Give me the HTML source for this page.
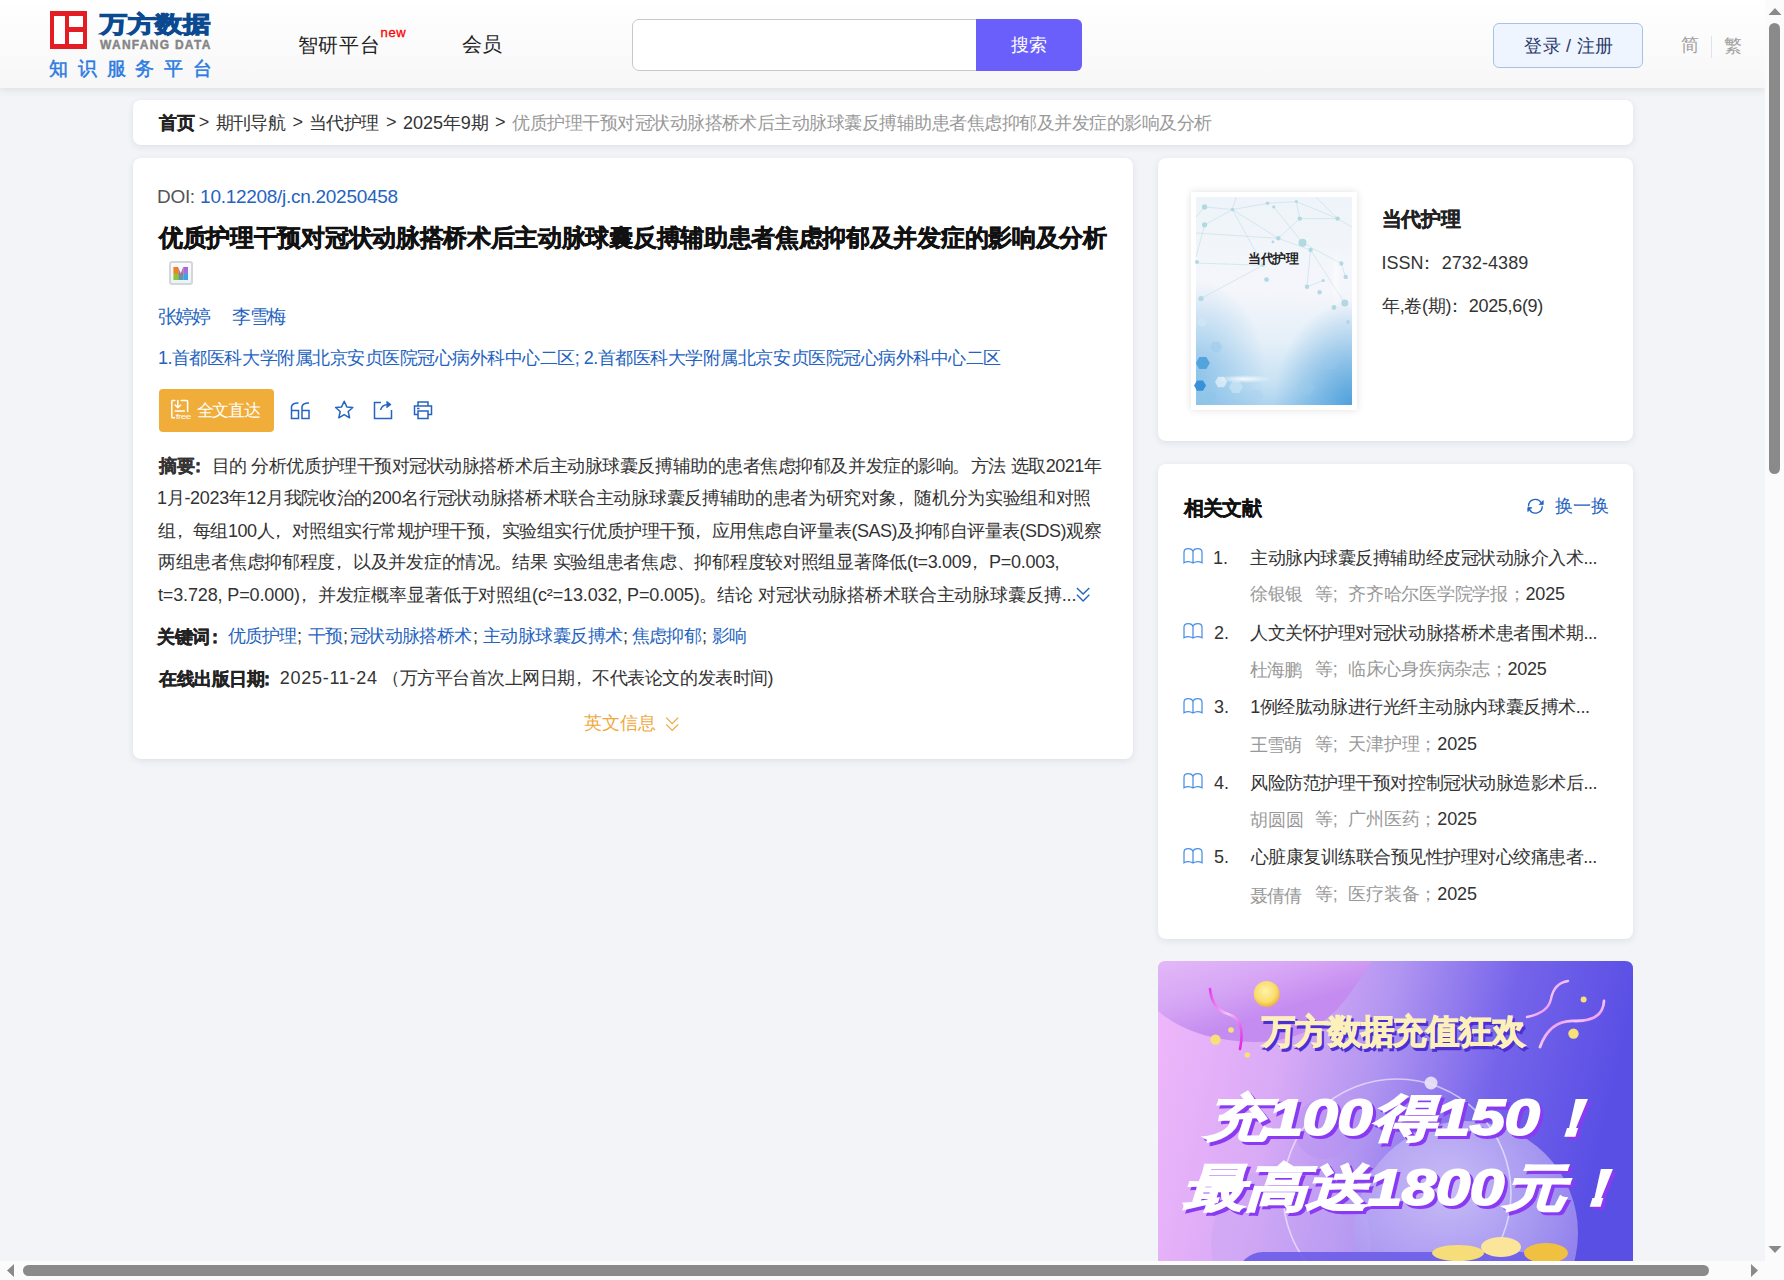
<!DOCTYPE html>
<html><head><meta charset="utf-8">
<style>
*{margin:0;padding:0;box-sizing:border-box}
html,body{width:1784px;height:1280px;overflow:hidden}
body{position:relative;background:#f2f4f8;font-family:"Liberation Sans",sans-serif;color:#333;font-size:18px;letter-spacing:-0.45px}
.a{position:absolute;white-space:nowrap;line-height:26px}
#hdr{position:absolute;left:0;top:0;width:1765px;height:88px;background:linear-gradient(#fff,#f7f7f8);box-shadow:0 2px 8px rgba(0,0,0,0.09)}
.card{position:absolute;background:#fff;border-radius:8px;box-shadow:0 2px 7px rgba(20,30,50,0.09)}
.blue{color:#2563c0}
.g{color:#999}
svg{position:absolute;overflow:visible}
</style></head><body>
<div id="hdr"></div>
<!-- logo -->
<div class="a" style="left:50px;top:11px;width:37px;height:38px;background:#e41d25"></div>
<div class="a" style="left:54px;top:16px;width:11px;height:28px;background:#fff"></div>
<div class="a" style="left:69px;top:16px;width:14px;height:11px;background:#fff"></div>
<div class="a" style="left:69px;top:32px;width:14px;height:12px;background:#fff"></div>
<div class="a" id="logo1" style="left:100px;top:5px;font-size:27px;font-weight:900;color:#0b4a91;line-height:36px;letter-spacing:0.667px;-webkit-text-stroke:1.3px #0b4a91;transform:scaleY(0.84);transform-origin:0 30px">万方数据</div>
<div class="a" id="logo2" style="left:100px;top:38px;font-size:12px;font-weight:bold;color:#858585;line-height:14px;letter-spacing:1.282px;-webkit-text-stroke:0.4px #858585">WANFANG DATA</div>
<div class="a" id="logo3" style="left:49px;top:56px;font-size:19px;color:#2c7be0;line-height:26px;letter-spacing:9.800px;-webkit-text-stroke:0.5px #2c7be0">知识服务平台</div>
<div class="a" id="nav1" style="left:297.6px;top:31px;font-size:20px;color:#222;line-height:28px;letter-spacing:0.9px">智研平台</div>
<div class="a" id="nav2" style="left:380.6px;top:25px;font-size:13px;color:#f00;line-height:16px;letter-spacing:0.650px;-webkit-text-stroke:0.3px #f00">new</div>
<div class="a" id="nav3" style="left:462px;top:30px;font-size:20px;color:#222;line-height:28px;letter-spacing:0">会员</div>
<div class="a" style="left:632px;top:19px;width:350px;height:52px;background:#fff;border:1px solid #c9c9c9;border-radius:7px 0 0 7px"></div>
<div class="a" style="left:976px;top:19px;width:106px;height:52px;background:#6a5ffb;border-radius:0 6px 6px 0"></div>
<div class="a" id="srch" style="left:1011px;top:32px;color:#fff;font-size:18px;letter-spacing:0">搜索</div>
<div class="a" style="left:1493px;top:23px;width:150px;height:45px;background:#eef5fe;border:1px solid #a8c0ea;border-radius:6px"></div>
<div class="a" id="login" style="left:1524.30px;top:33px;color:#2a3a6a;font-size:18px;letter-spacing:0.267px">登录 / 注册</div>
<div class="a" id="jian" style="left:1681px;top:32px;color:#a0a0a0">简</div>
<div class="a" style="left:1711px;top:36px;width:1px;height:22px;background:#e2e2e2"></div>
<div class="a" id="fan" style="left:1724px;top:33px;color:#a0a0a0">繁</div>

<!-- breadcrumb -->
<div class="card" style="left:133px;top:100px;width:1500px;height:45px"></div>
<div class="a" id="bc1" style="left:159.30px;top:110px;color:#222;font-weight:bold;-webkit-text-stroke:0.3px #222">首页</div>
<div class="a" id="bc2" style="left:198.80px;top:109px">&gt;</div>
<div class="a" id="bc3" style="left:215.80px;top:110px;letter-spacing:-0.683px">期刊导航</div>
<div class="a" id="bc4" style="left:292.50px;top:109px">&gt;</div>
<div class="a" id="bc5" style="left:309.20px;top:110px;letter-spacing:-0.717px">当代护理</div>
<div class="a" id="bc6" style="left:386px;top:109px">&gt;</div>
<div class="a" id="bc7" style="left:403px;top:110px;letter-spacing:-0.050px">2025年9期</div>
<div class="a" id="bc8" style="left:495px;top:109px">&gt;</div>
<div class="a g" id="bc9" style="left:512.20px;top:110px;letter-spacing:-0.517px">优质护理干预对冠状动脉搭桥术后主动脉球囊反搏辅助患者焦虑抑郁及并发症的影响及分析</div>

<!-- main card -->
<div class="card" style="left:133px;top:158px;width:1000px;height:601px"></div>
<div class="a" id="doi1" style="left:157.10px;top:184px;color:#555;font-size:19px;letter-spacing:-0.334px">DOI:</div>
<div class="a blue" id="doi2" style="left:200.10px;top:184px;font-size:19px;letter-spacing:-0.281px">10.12208/j.cn.20250458</div>
<div class="a" id="title" style="left:159px;top:222px;line-height:32px;font-size:24px;font-weight:bold;color:#111;-webkit-text-stroke:0.5px #111;letter-spacing:-0.307px">优质护理干预对冠状动脉搭桥术后主动脉球囊反搏辅助患者焦虑抑郁及并发症的影响及分析</div>
<div class="a" style="left:169px;top:261px;width:24px;height:24px;border:2px solid #d6d6d6;border-radius:3px;background:linear-gradient(#fafcff,#eaf2fb)"></div>
<svg style="left:173px;top:267px" width="16" height="14" viewBox="0 0 16 14">
<defs><linearGradient id="ml" x1="0" y1="0" x2="0" y2="1"><stop offset="0" stop-color="#f97a1a"/><stop offset="0.45" stop-color="#e8862a"/><stop offset="0.6" stop-color="#8ccc2c"/><stop offset="1" stop-color="#96bd3a"/></linearGradient>
<linearGradient id="mm" x1="0" y1="0" x2="0" y2="1"><stop offset="0" stop-color="#f07a6a"/><stop offset="0.5" stop-color="#a07a8a"/><stop offset="1" stop-color="#4ea69a"/></linearGradient>
<linearGradient id="mr" x1="0" y1="0" x2="0" y2="1"><stop offset="0" stop-color="#b45cdc"/><stop offset="0.45" stop-color="#9a78e0"/><stop offset="0.6" stop-color="#44a0e6"/><stop offset="1" stop-color="#3ea2ea"/></linearGradient>
<clipPath id="mc"><path d="M0.4 0 H5.2 L7.7 6.2 L10.2 0 H15 V13 H0.4 Z"/></clipPath></defs>
<g clip-path="url(#mc)"><rect x="0" y="0" width="5.2" height="13" fill="url(#ml)"/><rect x="5.2" y="0" width="5" height="13" fill="url(#mm)"/><rect x="10.2" y="0" width="5" height="13" fill="url(#mr)"/></g>
</svg>
<div class="a blue" id="au1" style="left:158.10px;top:304px;font-size:19px;letter-spacing:-2.050px">张婷婷</div>
<div class="a blue" id="au2" style="left:232.40px;top:304px;font-size:19px;letter-spacing:-1.500px">李雪梅</div>
<div class="a blue" id="aff" style="left:157.90px;top:345px;letter-spacing:-0.485px">1.首都医科大学附属北京安贞医院冠心病外科中心二区; 2.首都医科大学附属北京安贞医院冠心病外科中心二区</div>
<div class="a" style="left:159px;top:389px;width:115px;height:43px;background:#f0ad3a;border-radius:4px"></div>
<svg style="left:171px;top:400px" width="21" height="20" viewBox="0 0 21 20" fill="none" stroke="#fff" stroke-width="1.5" stroke-linecap="round">
<path d="M3.8 0.5 H1.6 Q0.8 0.5 0.8 1.3 V16.9 Q0.8 17.7 1.6 17.7 H3.5"/><path d="M10.2 0.5 H15.8 Q16.6 0.5 16.6 1.3 V11.6"/><path d="M6.8 0.5 V7.6 M4.1 5 L6.8 7.8 L9.7 5"/><path d="M4.2 10.9 H13.4"/>
<text x="4.8" y="18.9" font-size="7.6" textLength="15" lengthAdjust="spacingAndGlyphs" fill="#fff" stroke="none" font-family="Liberation Sans">free</text>
</svg>
<div class="a" id="free" style="left:196.60px;top:398px;color:#fff;font-size:17px;letter-spacing:-1.267px">全文直达</div>
<!-- action icons -->
<svg style="left:290px;top:401px" width="21" height="19" viewBox="0 0 21 19" fill="none" stroke="#2563c0" stroke-width="1.5">
<path d="M8.5 2 Q2.5 1.8 1.5 5.5 V17.5 H8.5 V9.5 H1.5"/><path d="M19 2 Q13 1.8 12 5.5 V17.5 H19 V9.5 H12"/>
</svg>
<svg style="left:334px;top:400px" width="21" height="21" viewBox="0 0 21 21" fill="none" stroke="#2563c0" stroke-width="1.5" stroke-linejoin="round">
<path d="M10.2 1.3 L12.8 6.9 L18.8 7.5 L14.2 11.5 L15.6 17.8 L10.2 14.6 L4.8 17.8 L6.2 11.5 L1.6 7.5 L7.6 6.9 Z"/>
</svg>
<svg style="left:373px;top:400px" width="21" height="21" viewBox="0 0 21 21" fill="none" stroke="#2563c0" stroke-width="1.5">
<path d="M8 2.5 H1.5 V18.5 H18.5 V10"/><path d="M7.5 10 Q9 4.5 15.5 4.5" /><path d="M13.5 1.5 L17.5 4.5 L13.5 7.5" fill="#2563c0" stroke-linejoin="round"/>
</svg>
<svg style="left:413px;top:400px" width="21" height="21" viewBox="0 0 21 21" fill="none" stroke="#2563c0" stroke-width="1.5">
<path d="M5 6 V2 H15 V6"/><path d="M5 14.5 H1.5 V6 H18.5 V14.5 H15"/><path d="M5 11 H15 V18.5 H5 Z"/><path d="M4 8.5 H6.5"/>
</svg>

<div class="a" id="ab1" style="left:159px;top:453px;line-height:26px"><b style="-webkit-text-stroke:0.3px #333">摘要<span style="position:relative;left:-5.5px">：</span></b>目的 分析优质护理干预对冠状动脉搭桥术后主动脉球囊反搏辅助的患者焦虑抑郁及并发症的影响<span style="position:relative;left:-1px">。</span>方法 选取2021年</div>
<div class="a" id="ab2" style="left:157px;top:485px;letter-spacing:-0.310px">1月-2023年12月我院收治的200名行冠状动脉搭桥术联合主动脉球囊反搏辅助的患者为研究对象<span style="position:relative;left:-5px">，</span>随机分为实验组和对照</div>
<div class="a" id="ab3" style="left:158px;top:518px;letter-spacing:-0.501px">组<span style="position:relative;left:-5px">，</span>每组100人<span style="position:relative;left:-5px">，</span>对照组实行常规护理干预<span style="position:relative;left:-5px">，</span>实验组实行优质护理干预<span style="position:relative;left:-5px">，</span>应用焦虑自评量表(SAS)及抑郁自评量表(SDS)观察</div>
<div class="a" id="ab4" style="left:158px;top:549px;letter-spacing:-0.281px">两组患者焦虑抑郁程度<span style="position:relative;left:-5px">，</span>以及并发症的情况<span style="position:relative;left:-1px">。</span>结果 实验组患者焦虑、抑郁程度较对照组显著降低(t=3.009<span style="position:relative;left:-5px">，</span>P=0.003,</div>
<div class="a" id="ab5" style="left:158px;top:582px;letter-spacing:-0.135px">t=3.728, P=0.000)<span style="position:relative;left:-5px">，</span>并发症概率显著低于对照组(c²=13.032, P=0.005)<span style="position:relative;left:-1px">。</span>结论 对冠状动脉搭桥术联合主动脉球囊反搏...</div>
<svg style="left:1076px;top:587px" width="15" height="16" viewBox="0 0 15 16" fill="none" stroke="#2563c0" stroke-width="1.4">
<path d="M0.9 0.9 L7.1 7.1 L13.3 0.9"/><path d="M0.9 7.7 L7.1 13.9 L13.3 7.7"/>
</svg>

<div class="a" id="kw0" style="left:157.40px;top:624px;font-weight:bold;color:#222;-webkit-text-stroke:0.3px #222">关键词<span style="position:relative;left:-4.5px">：</span></div>
<div class="a blue" id="kw1" style="left:228px;top:623px;letter-spacing:-0.984px">优质护理</div><div class="a" style="left:297px;top:623px">;</div>
<div class="a blue" id="kw2" style="left:307.60px;top:623px">干预</div><div class="a" style="left:343px;top:623px">;</div>
<div class="a blue" id="kw3" style="left:349.90px;top:623px;letter-spacing:-0.600px">冠状动脉搭桥术</div><div class="a" style="left:473px;top:623px">;</div>
<div class="a blue" id="kw4" style="left:482.90px;top:623px;letter-spacing:-0.522px">主动脉球囊反搏术</div><div class="a" style="left:623px;top:623px">;</div>
<div class="a blue" id="kw5" style="left:632px;top:623px;letter-spacing:-0.817px">焦虑抑郁</div><div class="a" style="left:702px;top:623px">;</div>
<div class="a blue" id="kw6" style="left:711.80px;top:623px">影响</div>
<div class="a" id="dt0" style="left:159px;top:666px;font-weight:bold;color:#222;-webkit-text-stroke:0.3px #222">在线出版日期<span style="position:relative;left:-6px">：</span></div>
<div class="a" id="dt1" style="left:279.80px;top:665px;letter-spacing:0.711px">2025-11-24</div>
<div class="a" id="dt2" style="left:382.20px;top:665px;letter-spacing:-0.482px">（万方平台首次上网日期<span style="position:relative;left:-5px">，</span>不代表论文的发表时间)</div>
<div class="a" id="eng" style="left:584px;top:710px;color:#f0a83c;letter-spacing:-0.117px">英文信息</div>
<svg style="left:665px;top:716px" width="15" height="16" viewBox="0 0 15 16" fill="none" stroke="#f0a83c" stroke-width="1.3">
<path d="M1.2 1.6 L7.2 7.6 L13.2 1.6"/><path d="M1.2 8.4 L7.2 14.4 L13.2 8.4"/>
</svg>

<!-- right card 1 -->
<div class="card" style="left:1158px;top:158px;width:475px;height:283px"></div>
<div class="a" style="left:1191px;top:192px;width:166px;height:218px;background:#fff;box-shadow:0 0 8px rgba(0,0,0,0.12)"></div>
<svg style="left:1196px;top:197px" width="156" height="208" viewBox="0 0 156 208">
<defs><linearGradient id="cg" x1="0" y1="0" x2="0" y2="1"><stop offset="0" stop-color="#eef4f9"/><stop offset="0.45" stop-color="#f5f6fb"/><stop offset="0.7" stop-color="#e4eff8"/><stop offset="0.9" stop-color="#c6e1f3"/><stop offset="1" stop-color="#acd3ef"/></linearGradient>
<radialGradient id="cr" cx="1" cy="1" r="0.5"><stop offset="0" stop-color="#3f98d9" stop-opacity="0.85"/><stop offset="1" stop-color="#3f98d9" stop-opacity="0"/></radialGradient>
<radialGradient id="cl" cx="0" cy="0.85" r="0.45"><stop offset="0" stop-color="#5aa8e0" stop-opacity="0.55"/><stop offset="1" stop-color="#5aa8e0" stop-opacity="0"/></radialGradient>
<radialGradient id="gl" cx="0.5" cy="0.5" r="0.5"><stop offset="0" stop-color="#fff" stop-opacity="1"/><stop offset="1" stop-color="#fff" stop-opacity="0"/></radialGradient></defs>
<rect width="156" height="208" fill="url(#cg)"/><rect width="156" height="208" fill="url(#cr)"/><rect width="156" height="208" fill="url(#cl)"/>
<g stroke="#bcdde5" stroke-width="0.6" opacity="0.9">
<line x1="8.6" y1="9.9" x2="36.5" y2="12.6"/>
<line x1="36.5" y1="12.6" x2="71.5" y2="6.3"/>
<line x1="36.5" y1="12.6" x2="8.6" y2="27.8"/>
<line x1="36.5" y1="12.6" x2="82.3" y2="41.3"/>
<line x1="36.5" y1="12.6" x2="67" y2="68.3"/>
<line x1="77.8" y1="9.9" x2="106.5" y2="45.8"/>
<line x1="100.3" y1="4.5" x2="103.8" y2="21.6"/>
<line x1="103.8" y1="21.6" x2="82.3" y2="41.3"/>
<line x1="103.8" y1="21.6" x2="141.6" y2="21.6"/>
<line x1="106.5" y1="45.8" x2="145.2" y2="66.5"/>
<line x1="114.6" y1="53" x2="111" y2="89.8"/>
<line x1="114.6" y1="53" x2="148.8" y2="106"/>
<line x1="67" y1="68.3" x2="5" y2="101.5"/>
<line x1="0" y1="66" x2="67" y2="68.3"/>
<line x1="82.3" y1="41.3" x2="0" y2="36"/>
<line x1="8.6" y1="27.8" x2="0" y2="60"/>
<line x1="71.5" y1="6.3" x2="100.3" y2="4.5"/>
<line x1="100.3" y1="4.5" x2="141.6" y2="21.6"/>
<line x1="141.6" y1="21.6" x2="156" y2="30"/>
<line x1="111" y1="89.8" x2="127.2" y2="83.5"/>
<line x1="145.2" y1="66.5" x2="149.7" y2="79.9"/>
<line x1="82.3" y1="41.3" x2="114.6" y2="53"/>
<line x1="8.6" y1="9.9" x2="0" y2="20"/>
<line x1="120" y1="0" x2="141.6" y2="21.6"/>
<line x1="40" y1="0" x2="36.5" y2="12.6"/>
</g><g fill="#b2d8e2">
<circle cx="8.6" cy="9.9" r="2.6"/>
<circle cx="8.6" cy="27.8" r="2.6"/>
<circle cx="36.5" cy="12.6" r="1.8"/>
<circle cx="71.5" cy="6.3" r="1.8"/>
<circle cx="77.8" cy="9.9" r="1.6"/>
<circle cx="100.3" cy="4.5" r="1.5"/>
<circle cx="103.8" cy="21.6" r="2.2"/>
<circle cx="82.3" cy="41.3" r="2.2"/>
<circle cx="76.9" cy="44.9" r="1.4"/>
<circle cx="106.5" cy="45.8" r="4"/>
<circle cx="114.6" cy="53" r="2.2"/>
<circle cx="141.6" cy="21.6" r="2.2"/>
<circle cx="145.2" cy="66.5" r="2.2"/>
<circle cx="149.7" cy="79.9" r="2.2"/>
<circle cx="5" cy="101.5" r="2.6"/>
<circle cx="70.6" cy="82.6" r="2.4"/>
<circle cx="111" cy="89.8" r="2.2"/>
<circle cx="123.6" cy="95.2" r="2.2"/>
<circle cx="127.2" cy="83.5" r="1.5"/>
<circle cx="138" cy="110.5" r="2.4"/>
<circle cx="148.8" cy="106" r="3.5"/>
<circle cx="67" cy="68.3" r="1.8"/>
<circle cx="1" cy="65" r="2"/>
<circle cx="152" cy="125" r="2"/>
</g>
<polygon points="13.8,166.0 10.3,172.1 3.3,172.1 -0.2,166.0 3.3,159.9 10.3,159.9" fill="#4aa0dc" opacity="0.9"/>
<polygon points="10.0,188.6 7.0,193.8 1.0,193.8 -2.0,188.6 1.0,183.4 7.0,183.4" fill="#2e8ad6" opacity="0.9"/>
<polygon points="26.0,150.0 23.0,155.2 17.0,155.2 14.0,150.0 17.0,144.8 23.0,144.8" fill="#9ccbec" opacity="0.6"/>
<polygon points="11.0,125.0 8.5,129.3 3.5,129.3 1.0,125.0 3.5,120.7 8.5,120.7" fill="#cfe6f5" opacity="0.8"/>
<polygon points="31.0,185.0 28.0,190.2 22.0,190.2 19.0,185.0 22.0,179.8 28.0,179.8" fill="#e8f4fb" opacity="0.7"/>
<polygon points="47.0,190.0 43.5,196.1 36.5,196.1 33.0,190.0 36.5,183.9 43.5,183.9" fill="#d6ebf8" opacity="0.5"/>
<polygon points="21.0,200.0 18.0,205.2 12.0,205.2 9.0,200.0 12.0,194.8 18.0,194.8" fill="#8ec4ea" opacity="0.6"/>
<polygon points="68.0,200.0 64.0,206.9 56.0,206.9 52.0,200.0 56.0,193.1 64.0,193.1" fill="#a9d3ef" opacity="0.4"/>
<polygon points="119.0,190.0 114.5,197.8 105.5,197.8 101.0,190.0 105.5,182.2 114.5,182.2" fill="#9ccbec" opacity="0.35"/>
<polygon points="143.0,165.0 139.0,171.9 131.0,171.9 127.0,165.0 131.0,158.1 139.0,158.1" fill="#9ccbec" opacity="0.3"/>
<ellipse cx="48" cy="182" rx="28" ry="4" fill="url(#gl)" opacity="0.9"/><ellipse cx="140" cy="80" rx="6" ry="30" fill="url(#gl)" opacity="0.6"/>
</svg>
<div class="a" id="cvt" style="left:1248.10px;top:250px;font-size:13px;font-weight:bold;color:#222;line-height:18px;letter-spacing:-0.3px">当代护理</div>
<div class="a" id="jt" style="left:1381.60px;top:205px;font-size:20px;font-weight:bold;line-height:28px;color:#222;letter-spacing:-0.183px;-webkit-text-stroke:0.3px #222">当代护理</div>
<div class="a" id="issn" style="left:1381.40px;top:250px;letter-spacing:0.058px">ISSN<span style="position:relative;left:-6px">：</span>2732-4389</div>
<div class="a" id="vol" style="left:1382px;top:293px;letter-spacing:-0.317px">年,卷(期)<span style="position:relative;left:-5.5px">：</span>2025,6(9)</div>

<!-- right card 2 -->
<div class="card" style="left:1158px;top:464px;width:475px;height:475px"></div>
<div class="a" id="rt" style="left:1184px;top:494px;font-size:20px;font-weight:bold;line-height:28px;color:#111;letter-spacing:-0.783px;-webkit-text-stroke:0.3px #111">相关文献</div>
<svg style="left:1526px;top:497px" width="18" height="18" viewBox="0 0 18 18" fill="none" stroke="#2563c0" stroke-width="1.35">
<path d="M2.5 9.4 A6.9 6.9 0 0 1 15.2 5.6"/><path d="M16.3 9.2 A6.9 6.9 0 0 1 3.6 12.9"/><path d="M17.2 3.6 V7.6 H13.2 Z" fill="#2563c0" stroke-width="0.8"/><path d="M1.8 10.6 H5.8 L1.8 14.6 Z" fill="#2563c0" stroke-width="0.8"/>
</svg>
<div class="a blue" id="chg" style="left:1555px;top:493px;letter-spacing:0.050px">换一换</div>

<svg style="left:1183px;top:548px" width="21" height="17" viewBox="0 0 21 17" fill="none" stroke="#4a8ee6" stroke-width="1.25">
<path d="M1 14.8 V4.2 Q1 0.6 5.2 0.6 Q9.2 0.6 10 3.6 Q10.8 0.6 14.8 0.6 Q19 0.6 19 4.2 V14.8 Q14.5 12.2 10 15 Q5.5 12.2 1 14.8 Z M10 3.6 V15"/></svg>
<div class="a" id="rn0" style="left:1213px;top:545px;letter-spacing:0">1.</div>
<div class="a" id="ri0" style="left:1250px;top:545px">主动脉内球囊反搏辅助经皮冠状动脉介入术...</div>
<div class="a g" id="ra0" style="left:1250.20px;top:581px">徐银银</div>
<div class="a g" id="rd0" style="left:1315.10px;top:581px">等;</div>
<div class="a" id="rj0" style="left:1348px;top:581px;letter-spacing:-0.242px"><span class="g">齐齐哈尔医学院学报；</span>2025</div>
<svg style="left:1183px;top:623px" width="21" height="17" viewBox="0 0 21 17" fill="none" stroke="#4a8ee6" stroke-width="1.25">
<path d="M1 14.8 V4.2 Q1 0.6 5.2 0.6 Q9.2 0.6 10 3.6 Q10.8 0.6 14.8 0.6 Q19 0.6 19 4.2 V14.8 Q14.5 12.2 10 15 Q5.5 12.2 1 14.8 Z M10 3.6 V15"/></svg>
<div class="a" id="rn1" style="left:1214px;top:620px;letter-spacing:0">2.</div>
<div class="a" id="ri1" style="left:1250px;top:620px">人文关怀护理对冠状动脉搭桥术患者围术期...</div>
<div class="a g" id="ra1" style="left:1250.20px;top:657px;letter-spacing:-0.850px">杜海鹏</div>
<div class="a g" id="rd1" style="left:1315.10px;top:656px">等;</div>
<div class="a" id="rj1" style="left:1348px;top:656px;letter-spacing:-0.267px"><span class="g">临床心身疾病杂志；</span>2025</div>
<svg style="left:1183px;top:698px" width="21" height="17" viewBox="0 0 21 17" fill="none" stroke="#4a8ee6" stroke-width="1.25">
<path d="M1 14.8 V4.2 Q1 0.6 5.2 0.6 Q9.2 0.6 10 3.6 Q10.8 0.6 14.8 0.6 Q19 0.6 19 4.2 V14.8 Q14.5 12.2 10 15 Q5.5 12.2 1 14.8 Z M10 3.6 V15"/></svg>
<div class="a" id="rn2" style="left:1214px;top:694px;letter-spacing:0">3.</div>
<div class="a" id="ri2" style="left:1250.20px;top:694px;letter-spacing:-0.441px">1例经肱动脉进行光纤主动脉内球囊反搏术...</div>
<div class="a g" id="ra2" style="left:1250.20px;top:732px;letter-spacing:-0.850px">王雪萌</div>
<div class="a g" id="rd2" style="left:1315.10px;top:731px">等;</div>
<div class="a" id="rj2" style="left:1348px;top:731px;letter-spacing:-0.139px"><span class="g">天津护理；</span>2025</div>
<svg style="left:1183px;top:773px" width="21" height="17" viewBox="0 0 21 17" fill="none" stroke="#4a8ee6" stroke-width="1.25">
<path d="M1 14.8 V4.2 Q1 0.6 5.2 0.6 Q9.2 0.6 10 3.6 Q10.8 0.6 14.8 0.6 Q19 0.6 19 4.2 V14.8 Q14.5 12.2 10 15 Q5.5 12.2 1 14.8 Z M10 3.6 V15"/></svg>
<div class="a" id="rn3" style="left:1214px;top:770px;letter-spacing:0">4.</div>
<div class="a" id="ri3" style="left:1250px;top:770px">风险防范护理干预对控制冠状动脉造影术后...</div>
<div class="a g" id="ra3" style="left:1250.20px;top:807px;letter-spacing:0.150px">胡圆圆</div>
<div class="a g" id="rd3" style="left:1315.10px;top:806px">等;</div>
<div class="a" id="rj3" style="left:1348px;top:806px;letter-spacing:-0.139px"><span class="g">广州医药；</span>2025</div>
<svg style="left:1183px;top:848px" width="21" height="17" viewBox="0 0 21 17" fill="none" stroke="#4a8ee6" stroke-width="1.25">
<path d="M1 14.8 V4.2 Q1 0.6 5.2 0.6 Q9.2 0.6 10 3.6 Q10.8 0.6 14.8 0.6 Q19 0.6 19 4.2 V14.8 Q14.5 12.2 10 15 Q5.5 12.2 1 14.8 Z M10 3.6 V15"/></svg>
<div class="a" id="rn4" style="left:1214px;top:844px;letter-spacing:0">5.</div>
<div class="a" id="ri4" style="left:1251px;top:844px;letter-spacing:-0.517px">心脏康复训练联合预见性护理对心绞痛患者...</div>
<div class="a g" id="ra4" style="left:1250.20px;top:883px;letter-spacing:-0.850px">聂倩倩</div>
<div class="a g" id="rd4" style="left:1315.10px;top:881px">等;</div>
<div class="a" id="rj4" style="left:1348px;top:881px;letter-spacing:-0.139px"><span class="g">医疗装备；</span>2025</div>

<!-- banner -->
<svg style="left:1158px;top:961px" width="475" height="300" viewBox="0 0 475 300">
<defs>
<clipPath id="bclip"><path d="M8 0 H467 Q475 0 475 8 V300 H0 V8 Q0 0 8 0 Z"/></clipPath>
<linearGradient id="bg1" x1="0" y1="0" x2="1" y2="0.15"><stop offset="0" stop-color="#f1b8fb"/><stop offset="0.3" stop-color="#d9aaf6"/><stop offset="0.5" stop-color="#b195f1"/><stop offset="0.75" stop-color="#7564ea"/><stop offset="1" stop-color="#5a4fe5"/></linearGradient>
<linearGradient id="bg2" gradientUnits="userSpaceOnUse" x1="0" y1="0" x2="25" y2="80"><stop offset="0" stop-color="#e3b8f8"/><stop offset="0.55" stop-color="#d6a6f5"/><stop offset="1" stop-color="#c48cf0"/></linearGradient>
<radialGradient id="bcirc" cx="0.45" cy="0.3" r="0.7"><stop offset="0" stop-color="#e0d6fa"/><stop offset="0.6" stop-color="#b8a8f3"/><stop offset="1" stop-color="#9a88ee"/></radialGradient>
<radialGradient id="coin" cx="0.45" cy="0.4" r="0.6"><stop offset="0" stop-color="#fff3a8"/><stop offset="0.7" stop-color="#f9dc6a"/><stop offset="1" stop-color="#eeb23a"/></radialGradient>
<linearGradient id="rib" x1="0" y1="0" x2="1" y2="1"><stop offset="0" stop-color="#e040e8"/><stop offset="0.5" stop-color="#f6c6f8"/><stop offset="1" stop-color="#e020e0"/></linearGradient>
</defs>
<g clip-path="url(#bclip)">
<rect width="475" height="300" fill="url(#bg1)"/>
<path d="M0 50 Q35 80 97 81 Q155 81 188 38 Q203 17 214 0 H0 Z" fill="url(#bg2)"/>
<circle cx="133" cy="282" r="80" fill="#c8a6f4" opacity="0.45"/>
<circle cx="308" cy="272" r="112" fill="url(#bcirc)" opacity="0.75"/>
<circle cx="166" cy="168" r="30" fill="#b48ef0" opacity="0.35"/>
<circle cx="239" cy="232" r="114" fill="none" stroke="#fff" stroke-opacity="0.55" stroke-width="1.6"/>
<circle cx="273" cy="122" r="6.5" fill="#ece4fb" opacity="0.9"/>
<rect x="79" y="291" width="310" height="60" rx="26" fill="#6c5de8" opacity="0.9"/>
<g fill="#f2c64e"><ellipse cx="300" cy="292" rx="26" ry="8" fill="#f7dc7a"/><ellipse cx="343" cy="286" rx="20" ry="10" fill="#fae59a"/><ellipse cx="388" cy="292" rx="22" ry="10" fill="#f0c040"/></g>
<circle cx="108.7" cy="33" r="13" fill="url(#coin)"/>
<circle cx="57.5" cy="78.6" r="5.2" fill="#f8df7a"/><circle cx="73" cy="69" r="2.8" fill="#f8df7a"/><circle cx="89.3" cy="94" r="2.8" fill="#f8df7a"/>
<path d="M52 28 Q54 48 70 53 Q88 58 82 88" fill="none" stroke="url(#rib)" stroke-width="2.6" stroke-linecap="round"/>
<circle cx="425.6" cy="38.6" r="3" fill="#f8df7a"/><circle cx="415.5" cy="72.6" r="5.2" fill="#f8df7a"/>
<path d="M369 56 Q390 52 393 38 Q396 22 410 20" fill="none" stroke="url(#rib)" stroke-width="2.4" stroke-linecap="round"/>
<path d="M382 86 Q392 58 418 60 Q445 60 446 40" fill="none" stroke="url(#rib)" stroke-width="2.8" stroke-linecap="round"/>
<g font-family="Liberation Sans" font-weight="bold">
<text x="106" y="85" font-size="34" textLength="263" lengthAdjust="spacingAndGlyphs" fill="#4a2fd4" stroke="#4a2fd4" stroke-width="1.5">万方数据充值狂欢</text>
<text x="104" y="82" font-size="34" textLength="263" lengthAdjust="spacingAndGlyphs" fill="#fdf0bb" stroke="#fdf0bb" stroke-width="1.2">万方数据充值狂欢</text>
</g>
<g font-family="Liberation Sans" font-weight="bold" font-style="italic">
<text x="50" y="177" font-size="50" textLength="397" lengthAdjust="spacingAndGlyphs" fill="#8a3af2" stroke="#8a3af2" stroke-width="2">充100得150！</text>
<text x="47" y="174" font-size="50" textLength="397" lengthAdjust="spacingAndGlyphs" fill="#fff" stroke="#fff" stroke-width="1.8">充100得150！</text>
<text x="28" y="247" font-size="50" textLength="444" lengthAdjust="spacingAndGlyphs" fill="#8a3af2" stroke="#8a3af2" stroke-width="2">最高送1800元！</text>
<text x="25" y="244" font-size="50" textLength="444" lengthAdjust="spacingAndGlyphs" fill="#fff" stroke="#fff" stroke-width="1.8">最高送1800元！</text>
</g>
</g>
</svg>

<!-- scrollbars -->
<div class="a" style="left:1765px;top:0;width:19px;height:1280px;background:#fbfbfb"></div>
<div class="a" style="left:0;top:1261px;width:1784px;height:19px;background:#fbfbfb"></div>
<div class="a" style="left:1769px;top:23px;width:11px;height:451px;border-radius:6px;background:#8a8a8a"></div>
<div class="a" style="left:23px;top:1265px;width:1686px;height:11px;border-radius:6px;background:#8a8a8a"></div>
<svg style="left:1765px;top:0" width="19" height="1261"><path d="M3.5 15 L10 8 L16.5 15 Z M3.5 1246 L16.5 1246 L10 1253 Z" fill="#8a8a8a"/></svg>
<svg style="left:0;top:1261px" width="1765" height="19"><path d="M14 3 L14 16 L7 9.5 Z M1751 3 L1751 16 L1758 9.5 Z" fill="#8a8a8a"/></svg>
</body></html>
